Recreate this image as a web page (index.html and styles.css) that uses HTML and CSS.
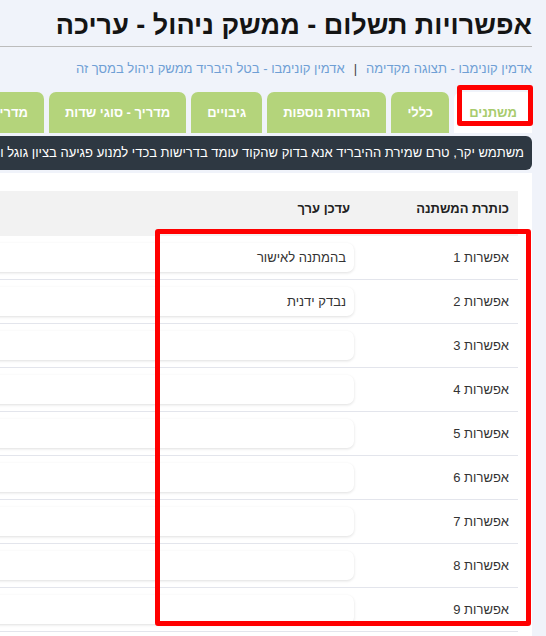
FILE: index.html
```html
<!DOCTYPE html>
<html lang="he">
<head>
<meta charset="utf-8">
<title>אפשרויות תשלום - ממשק ניהול - עריכה</title>
<link rel="stylesheet" href="styles.css">
</head>
<body>
<div class="page" dir="rtl">
  <div class="inner">
    <h1 class="title">אפשרויות תשלום - ממשק ניהול - עריכה</h1>
    <div class="rule"></div>
    <div class="crumbs">
      <a class="crumb">אדמין קונימבו - תצוגה מקדימה</a>
      <span class="sep">|</span>
      <a class="crumb">אדמין קונימבו - בטל היבריד ממשק ניהול במסך זה</a>
    </div>
    <div class="tabs">
      <div class="tab active">משתנים<span class="mark mark-tab"></span></div>
      <div class="tab">כללי</div>
      <div class="tab">הגדרות נוספות</div>
      <div class="tab">גיבויים</div>
      <div class="tab">מדריך - סוגי שדות</div>
      <div class="tab">מדריך - עיצוב</div>
    </div>
    <div class="notice">משתמש יקר, טרם שמירת ההיבריד אנא בדוק שהקוד עומד בדרישות בכדי למנוע פגיעה בציון גוגל וטעינת האתר</div>
    <div class="card">
      <div class="table">
        <div class="row head">
          <div class="c-label">כותרת המשתנה</div>
          <div class="c-value">עדכן ערך</div>
        </div>
        <div class="row"><div class="c-label">אפשרות 1</div><div class="c-value"><div class="input">בהמתנה לאישור</div></div></div>
        <div class="row"><div class="c-label">אפשרות 2</div><div class="c-value"><div class="input">נבדק ידנית</div></div></div>
        <div class="row"><div class="c-label">אפשרות 3</div><div class="c-value"><div class="input"></div></div></div>
        <div class="row"><div class="c-label">אפשרות 4</div><div class="c-value"><div class="input"></div></div></div>
        <div class="row"><div class="c-label">אפשרות 5</div><div class="c-value"><div class="input"></div></div></div>
        <div class="row"><div class="c-label">אפשרות 6</div><div class="c-value"><div class="input"></div></div></div>
        <div class="row"><div class="c-label">אפשרות 7</div><div class="c-value"><div class="input"></div></div></div>
        <div class="row"><div class="c-label">אפשרות 8</div><div class="c-value"><div class="input"></div></div></div>
        <div class="row"><div class="c-label">אפשרות 9</div><div class="c-value"><div class="input"></div></div></div>
        <span class="mark mark-rows"></span>
      </div>
    </div>
  </div>
</div>
</body>
</html>
```

FILE: styles.css
```css
html, body {
  margin: 0;
  padding: 0;
  background: #f0f3fa;
  overflow: hidden;
}
body {
  font-family: "Liberation Sans", Arial, sans-serif;
  color: #333;
}
.page {
  overflow: hidden;
  height: 636px;
}
.inner {
  margin-left: -40px;
  padding-right: 14px;
}
.title {
  margin: 10px 0 0;
  font-size: 27px;
  line-height: 30px;
  font-weight: bold;
  color: #141414;
  white-space: nowrap;
}
.rule {
  margin-top: 6px;
  border-top: 1px solid #bcbcbc;
}
.crumbs {
  margin-top: 13px;
  font-size: 13px;
  line-height: 18px;
  white-space: nowrap;
  display: flex;
  gap: 9px;
}
.crumb {
  color: #6f9fd5;
}
.sep {
  color: #444;
}
.tabs {
  margin-top: 14px;
  display: flex;
  gap: 5px;
  white-space: nowrap;
}
.tab {
  position: relative;
  height: 41px;
  line-height: 41px;
  padding: 0 16px;
  background: #b4d47b;
  color: #fff;
  font-weight: bold;
  font-size: 13px;
  border-radius: 7px 7px 0 0;
  flex: none;
}
.tab.active {
  background: #fff;
  color: #a8cb6d;
  padding: 0 12px;
  min-width: 54px;
  text-align: center;
}
.mark {
  position: absolute;
  box-sizing: border-box;
  border: 5px solid #ff0000;
  border-radius: 3px;
  pointer-events: none;
}
.mark-tab {
  top: -7px;
  right: -1px;
  width: 76px;
  height: 41px;
}
.notice {
  margin-top: 3px;
  height: 34px;
  line-height: 34px;
  background: #2e3842;
  color: #fff;
  font-size: 13px;
  padding: 0 8px;
  border-radius: 6px;
  white-space: nowrap;
  overflow: hidden;
}
.card {
  margin-top: 3px;
  background: #fff;
  padding: 18px 14px 24px 0;
}
.table {
  position: relative;
}
.row {
  display: flex;
  align-items: center;
  height: 43px;
  border-bottom: 1px solid #e3e5ec;
  font-size: 13px;
}
.row.head {
  height: 45px;
  align-items: flex-start;
  background: #f2f2f2;
  border-bottom: none;
  font-weight: bold;
  color: #222;
}
.row.head > div {
  padding-top: 10px;
}
.c-label {
  width: 151px;
  padding-right: 9px;
  flex: none;
  white-space: nowrap;
}
.c-value {
  flex: 1;
  padding-right: 4px;
}
.row.head .c-value {
  padding-right: 8px;
}
.input {
  height: 29px;
  line-height: 29px;
  border-radius: 7px;
  background: #fff;
  box-shadow: 0 1px 3px rgba(0, 0, 0, 0.13);
  padding-right: 8px;
  color: #333;
  white-space: nowrap;
}
.mark-rows {
  top: 38px;
  right: -13px;
  width: 376px;
  height: 397px;
}
```
